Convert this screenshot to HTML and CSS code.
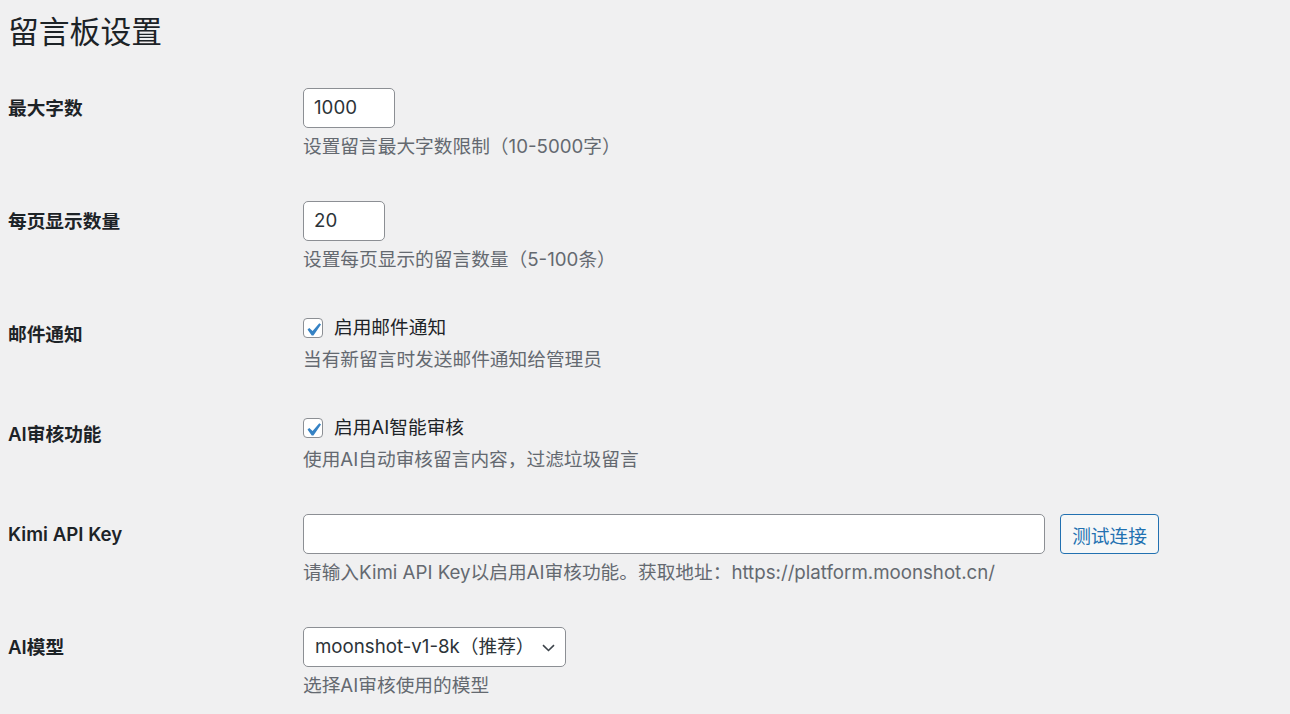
FILE: index.html
```html
<!DOCTYPE html>
<html lang="zh-CN">
<head>
<meta charset="utf-8">
<title>留言板设置</title>
<link rel="stylesheet" href="styles.css">
</head>
<body>
<div class="wrap">
  <h1 class="title">留言板设置</h1>
  <div class="form">
    <div class="row">
      <div class="th">最大字数</div>
      <div class="td">
        <div class="field w-max">1000</div>
        <p class="desc">设置留言最大字数限制（10-5000字）</p>
      </div>
    </div>
    <div class="row">
      <div class="th">每页显示数量</div>
      <div class="td">
        <div class="field w-page">20</div>
        <p class="desc">设置每页显示的留言数量（5-100条）</p>
      </div>
    </div>
    <div class="row">
      <div class="th">邮件通知</div>
      <div class="td">
        <div class="check-line">
          <span class="checkbox"><svg viewBox="0 0 20 20" width="26" height="26"><path d="M14.83 4.89l1.34.94-5.81 8.38H9.02L5.78 9.67l1.34-1.25 2.57 2.4z" fill="#3582c4"/></svg></span>
          <span class="check-label">启用邮件通知</span>
        </div>
        <p class="desc">当有新留言时发送邮件通知给管理员</p>
      </div>
    </div>
    <div class="row">
      <div class="th">AI审核功能</div>
      <div class="td">
        <div class="check-line">
          <span class="checkbox"><svg viewBox="0 0 20 20" width="26" height="26"><path d="M14.83 4.89l1.34.94-5.81 8.38H9.02L5.78 9.67l1.34-1.25 2.57 2.4z" fill="#3582c4"/></svg></span>
          <span class="check-label">启用AI智能审核</span>
        </div>
        <p class="desc">使用AI自动审核留言内容，过滤垃圾留言</p>
      </div>
    </div>
    <div class="row">
      <div class="th">Kimi API Key</div>
      <div class="td">
        <div class="inline">
          <div class="field w-key"></div>
          <button class="btn" type="button">测试连接</button>
        </div>
        <p class="desc">请输入Kimi API Key以启用AI审核功能。获取地址：https://platform.moonshot.cn/</p>
      </div>
    </div>
    <div class="row">
      <div class="th">AI模型</div>
      <div class="td">
        <div class="field select">
          <span>moonshot-v1-8k（推荐）</span>
          <svg class="chev" viewBox="0 0 13 8" width="13" height="8"><path d="M1 1.2l5.5 5.3 5.5-5.3" fill="none" stroke="#3c434a" stroke-width="1.6"/></svg>
        </div>
        <p class="desc">选择AI审核使用的模型</p>
      </div>
    </div>
  </div>
</div>
</body>
</html>
```

FILE: styles.css
```css
* { box-sizing: border-box; }

html, body {
  margin: 0;
  padding: 0;
  background: #f0f0f1;
}

body {
  font-family: Inter, "Noto Sans CJK SC", sans-serif;
  font-size: 18.7px;
  color: #1d2327;
}

.wrap {
  padding: 0 0 0 8px;
}

.title {
  margin: 0;
  padding-top: 12px;
  font-size: 30.8px;
  font-weight: 400;
  line-height: 40px;
  color: #1d2327;
}

.form {
  margin-top: 16px;
}

.row {
  display: grid;
  grid-template-columns: 295px 1fr;
}

.th {
  padding-top: 29px;
  line-height: 24px;
  font-weight: 600;
  color: #1d2327;
}

.td {
  padding: 20px 0;
}

.field {
  height: 40px;
  background: #fff;
  border: 1px solid #8c8f94;
  border-radius: 5px;
  padding: 0 10px;
  display: flex;
  align-items: center;
  line-height: 1;
  color: #2c3338;
}

.w-max { width: 92px; }
.w-page { width: 82px; }
.w-key { width: 742px; }

.inline {
  display: flex;
  gap: 15px;
}

.btn {
  height: 40px;
  width: 99px;
  background: #f6f7f7;
  border: 1px solid #2271b1;
  border-radius: 4px;
  color: #2271b1;
  font-family: inherit;
  font-size: 18.7px;
  padding: 0;
}

.select {
  width: 263px;
  justify-content: space-between;
  padding: 0 10px 0 11px;
}

.chev {
  display: block;
  margin-top: 2px;
}

.desc {
  margin: 5px 0 0;
  line-height: 28px;
  color: #646970;
}

.check-line {
  display: flex;
  align-items: center;
  height: 27px;
  gap: 11px;
}

.checkbox {
  width: 20px;
  height: 20px;
  background: #fff;
  border: 1px solid #8c8f94;
  border-radius: 4px;
  display: flex;
  align-items: center;
  justify-content: center;
  overflow: visible;
}

.checkbox svg {
  display: block;
  width: 26px;
  height: 26px;
  flex: none;
  margin: 2px -3px -2px -3px;
}

.check-label {
  color: #1d2327;
  line-height: 27px;
}
```
